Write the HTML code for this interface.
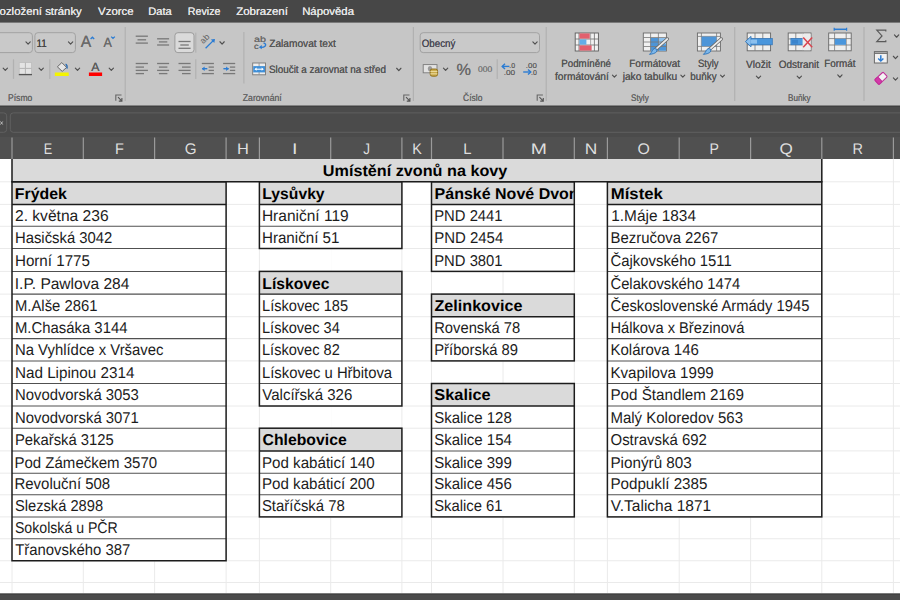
<!DOCTYPE html>
<html><head><meta charset="utf-8">
<style>
html,body{margin:0;padding:0;}
body{text-rendering:geometricPrecision;width:900px;height:600px;overflow:hidden;position:relative;background:#fff;font-family:"Liberation Sans",sans-serif;}
.abs{position:absolute;}
#tabs{position:absolute;left:0;top:0;width:900px;height:23px;background:linear-gradient(#474747 0,#474747 22px,#7a7a7a 22px,#7a7a7a 23px);}
#tabs span{position:absolute;top:3px;font-size:12.2px;color:#ececec;white-space:nowrap;}
#ribbon{position:absolute;left:0;top:23px;width:900px;height:82px;background:#c6c6c6;}
#fbar{position:absolute;left:0;top:105px;width:900px;height:33px;background:linear-gradient(#838383 0,#838383 1px,#404040 1px,#404040 2px,#4b4b4b 2px);}
#colhead{position:absolute;left:0;top:137px;width:900px;height:22px;background:#505050;}
.ch{position:absolute;top:0;height:22px;line-height:22px;text-align:center;color:#e8e8e8;font-size:15.2px;}
.ch span{display:inline-block;transform:scaleX(0.9);position:relative;top:0.4px;left:0.5px;}
#sheet{position:absolute;left:0;top:0;width:900px;height:600px;}
.s{position:absolute;white-space:nowrap;display:block;transform-origin:0 0;font-size:15.7px;line-height:15.7px;color:#1c1c1c;}
.s.b{font-weight:bold;color:#000;}
.clip{position:absolute;overflow:hidden;}
#rlayer{position:absolute;left:0;top:0;width:900px;height:106px;overflow:hidden;}
.t{position:absolute;white-space:nowrap;transform-origin:0 0;display:block;}
#bottom{position:absolute;left:0;top:593px;width:900px;height:7px;background:linear-gradient(#7a7a7a 0,#7a7a7a 1px,#424242 1px,#424242 2px,#4b4b4b 2px);}
.rt{position:absolute;color:#3a3a3a;font-size:10px;white-space:nowrap;}
.sep{position:absolute;width:1px;background:#a8a8a8;top:5px;height:73px;}
</style></head><body>
<div id="sheet"><svg class="abs" style="left:0;top:0" width="900" height="600" viewBox="0 0 900 600"><line x1="12.00" y1="159.00" x2="12.00" y2="593.00" stroke="#eaeaea" stroke-width="1"/><line x1="83.30" y1="159.00" x2="83.30" y2="593.00" stroke="#eaeaea" stroke-width="1"/><line x1="154.60" y1="159.00" x2="154.60" y2="593.00" stroke="#eaeaea" stroke-width="1"/><line x1="226.10" y1="159.00" x2="226.10" y2="593.00" stroke="#eaeaea" stroke-width="1"/><line x1="259.40" y1="159.00" x2="259.40" y2="593.00" stroke="#eaeaea" stroke-width="1"/><line x1="330.70" y1="159.00" x2="330.70" y2="593.00" stroke="#eaeaea" stroke-width="1"/><line x1="401.90" y1="159.00" x2="401.90" y2="593.00" stroke="#eaeaea" stroke-width="1"/><line x1="431.50" y1="159.00" x2="431.50" y2="593.00" stroke="#eaeaea" stroke-width="1"/><line x1="503.00" y1="159.00" x2="503.00" y2="593.00" stroke="#eaeaea" stroke-width="1"/><line x1="574.30" y1="159.00" x2="574.30" y2="593.00" stroke="#eaeaea" stroke-width="1"/><line x1="607.40" y1="159.00" x2="607.40" y2="593.00" stroke="#eaeaea" stroke-width="1"/><line x1="679.20" y1="159.00" x2="679.20" y2="593.00" stroke="#eaeaea" stroke-width="1"/><line x1="750.60" y1="159.00" x2="750.60" y2="593.00" stroke="#eaeaea" stroke-width="1"/><line x1="821.80" y1="159.00" x2="821.80" y2="593.00" stroke="#eaeaea" stroke-width="1"/><line x1="893.40" y1="159.00" x2="893.40" y2="593.00" stroke="#eaeaea" stroke-width="1"/><line x1="0.00" y1="181.80" x2="900.00" y2="181.80" stroke="#eaeaea" stroke-width="1"/><line x1="0.00" y1="204.40" x2="900.00" y2="204.40" stroke="#eaeaea" stroke-width="1"/><line x1="0.00" y1="226.30" x2="900.00" y2="226.30" stroke="#eaeaea" stroke-width="1"/><line x1="0.00" y1="248.50" x2="900.00" y2="248.50" stroke="#eaeaea" stroke-width="1"/><line x1="0.00" y1="271.40" x2="900.00" y2="271.40" stroke="#eaeaea" stroke-width="1"/><line x1="0.00" y1="294.10" x2="900.00" y2="294.10" stroke="#eaeaea" stroke-width="1"/><line x1="0.00" y1="316.70" x2="900.00" y2="316.70" stroke="#eaeaea" stroke-width="1"/><line x1="0.00" y1="338.60" x2="900.00" y2="338.60" stroke="#eaeaea" stroke-width="1"/><line x1="0.00" y1="360.90" x2="900.00" y2="360.90" stroke="#eaeaea" stroke-width="1"/><line x1="0.00" y1="383.50" x2="900.00" y2="383.50" stroke="#eaeaea" stroke-width="1"/><line x1="0.00" y1="406.00" x2="900.00" y2="406.00" stroke="#eaeaea" stroke-width="1"/><line x1="0.00" y1="428.20" x2="900.00" y2="428.20" stroke="#eaeaea" stroke-width="1"/><line x1="0.00" y1="450.90" x2="900.00" y2="450.90" stroke="#eaeaea" stroke-width="1"/><line x1="0.00" y1="473.15" x2="900.00" y2="473.15" stroke="#eaeaea" stroke-width="1"/><line x1="0.00" y1="494.80" x2="900.00" y2="494.80" stroke="#eaeaea" stroke-width="1"/><line x1="0.00" y1="516.90" x2="900.00" y2="516.90" stroke="#eaeaea" stroke-width="1"/><line x1="0.00" y1="538.75" x2="900.00" y2="538.75" stroke="#eaeaea" stroke-width="1"/><line x1="0.00" y1="560.75" x2="900.00" y2="560.75" stroke="#eaeaea" stroke-width="1"/><line x1="0.00" y1="582.50" x2="900.00" y2="582.50" stroke="#eaeaea" stroke-width="1"/><rect x="329.90" y="249.10" width="1.60" height="21.70" fill="#fff"/><rect x="329.90" y="406.60" width="1.60" height="21.00" fill="#fff"/><rect x="12.00" y="159.00" width="809.80" height="22.80" fill="#dadada"/><rect x="12.00" y="181.80" width="214.10" height="378.95" fill="#fff"/><rect x="12.00" y="181.80" width="214.10" height="22.60" fill="#dadada"/><rect x="259.40" y="181.80" width="142.50" height="66.70" fill="#fff"/><rect x="259.40" y="181.80" width="142.50" height="22.60" fill="#dadada"/><rect x="259.40" y="271.40" width="142.50" height="134.60" fill="#fff"/><rect x="259.40" y="271.40" width="142.50" height="22.70" fill="#dadada"/><rect x="259.40" y="428.20" width="142.50" height="88.70" fill="#fff"/><rect x="259.40" y="428.20" width="142.50" height="22.70" fill="#dadada"/><rect x="431.50" y="181.80" width="142.80" height="89.60" fill="#fff"/><rect x="431.50" y="181.80" width="142.80" height="22.60" fill="#dadada"/><rect x="431.50" y="294.10" width="142.80" height="66.80" fill="#fff"/><rect x="431.50" y="294.10" width="142.80" height="22.60" fill="#dadada"/><rect x="431.50" y="383.50" width="142.80" height="133.40" fill="#fff"/><rect x="431.50" y="383.50" width="142.80" height="22.50" fill="#dadada"/><rect x="607.40" y="181.80" width="214.40" height="335.10" fill="#fff"/><rect x="607.40" y="181.80" width="214.40" height="22.60" fill="#dadada"/><line x1="12.00" y1="226.30" x2="226.10" y2="226.30" stroke="#505050" stroke-width="1.05"/><line x1="12.00" y1="248.50" x2="226.10" y2="248.50" stroke="#505050" stroke-width="1.05"/><line x1="12.00" y1="271.40" x2="226.10" y2="271.40" stroke="#505050" stroke-width="1.05"/><line x1="12.00" y1="294.10" x2="226.10" y2="294.10" stroke="#505050" stroke-width="1.05"/><line x1="12.00" y1="316.70" x2="226.10" y2="316.70" stroke="#505050" stroke-width="1.05"/><line x1="12.00" y1="338.60" x2="226.10" y2="338.60" stroke="#505050" stroke-width="1.05"/><line x1="12.00" y1="360.90" x2="226.10" y2="360.90" stroke="#505050" stroke-width="1.05"/><line x1="12.00" y1="383.50" x2="226.10" y2="383.50" stroke="#505050" stroke-width="1.05"/><line x1="12.00" y1="406.00" x2="226.10" y2="406.00" stroke="#505050" stroke-width="1.05"/><line x1="12.00" y1="428.20" x2="226.10" y2="428.20" stroke="#505050" stroke-width="1.05"/><line x1="12.00" y1="450.90" x2="226.10" y2="450.90" stroke="#505050" stroke-width="1.05"/><line x1="12.00" y1="473.15" x2="226.10" y2="473.15" stroke="#505050" stroke-width="1.05"/><line x1="12.00" y1="494.80" x2="226.10" y2="494.80" stroke="#505050" stroke-width="1.05"/><line x1="12.00" y1="516.90" x2="226.10" y2="516.90" stroke="#505050" stroke-width="1.05"/><line x1="12.00" y1="538.75" x2="226.10" y2="538.75" stroke="#505050" stroke-width="1.05"/><line x1="12.00" y1="204.40" x2="226.10" y2="204.40" stroke="#1c1c1c" stroke-width="1.45"/><rect x="12.00" y="181.80" width="214.10" height="378.95" fill="none" stroke="#1c1c1c" stroke-width="1.5"/><line x1="259.40" y1="226.30" x2="401.90" y2="226.30" stroke="#505050" stroke-width="1.05"/><line x1="259.40" y1="204.40" x2="401.90" y2="204.40" stroke="#1c1c1c" stroke-width="1.45"/><rect x="259.40" y="181.80" width="142.50" height="66.70" fill="none" stroke="#1c1c1c" stroke-width="1.5"/><line x1="259.40" y1="316.70" x2="401.90" y2="316.70" stroke="#505050" stroke-width="1.05"/><line x1="259.40" y1="338.60" x2="401.90" y2="338.60" stroke="#505050" stroke-width="1.05"/><line x1="259.40" y1="360.90" x2="401.90" y2="360.90" stroke="#505050" stroke-width="1.05"/><line x1="259.40" y1="383.50" x2="401.90" y2="383.50" stroke="#505050" stroke-width="1.05"/><line x1="259.40" y1="294.10" x2="401.90" y2="294.10" stroke="#1c1c1c" stroke-width="1.45"/><rect x="259.40" y="271.40" width="142.50" height="134.60" fill="none" stroke="#1c1c1c" stroke-width="1.5"/><line x1="259.40" y1="473.15" x2="401.90" y2="473.15" stroke="#505050" stroke-width="1.05"/><line x1="259.40" y1="494.80" x2="401.90" y2="494.80" stroke="#505050" stroke-width="1.05"/><line x1="259.40" y1="450.90" x2="401.90" y2="450.90" stroke="#1c1c1c" stroke-width="1.45"/><rect x="259.40" y="428.20" width="142.50" height="88.70" fill="none" stroke="#1c1c1c" stroke-width="1.5"/><line x1="431.50" y1="226.30" x2="574.30" y2="226.30" stroke="#505050" stroke-width="1.05"/><line x1="431.50" y1="248.50" x2="574.30" y2="248.50" stroke="#505050" stroke-width="1.05"/><line x1="431.50" y1="204.40" x2="574.30" y2="204.40" stroke="#1c1c1c" stroke-width="1.45"/><rect x="431.50" y="181.80" width="142.80" height="89.60" fill="none" stroke="#1c1c1c" stroke-width="1.5"/><line x1="431.50" y1="338.60" x2="574.30" y2="338.60" stroke="#505050" stroke-width="1.05"/><line x1="431.50" y1="316.70" x2="574.30" y2="316.70" stroke="#1c1c1c" stroke-width="1.45"/><rect x="431.50" y="294.10" width="142.80" height="66.80" fill="none" stroke="#1c1c1c" stroke-width="1.5"/><line x1="431.50" y1="428.20" x2="574.30" y2="428.20" stroke="#505050" stroke-width="1.05"/><line x1="431.50" y1="450.90" x2="574.30" y2="450.90" stroke="#505050" stroke-width="1.05"/><line x1="431.50" y1="473.15" x2="574.30" y2="473.15" stroke="#505050" stroke-width="1.05"/><line x1="431.50" y1="494.80" x2="574.30" y2="494.80" stroke="#505050" stroke-width="1.05"/><line x1="431.50" y1="406.00" x2="574.30" y2="406.00" stroke="#1c1c1c" stroke-width="1.45"/><rect x="431.50" y="383.50" width="142.80" height="133.40" fill="none" stroke="#1c1c1c" stroke-width="1.5"/><line x1="607.40" y1="226.30" x2="821.80" y2="226.30" stroke="#505050" stroke-width="1.05"/><line x1="607.40" y1="248.50" x2="821.80" y2="248.50" stroke="#505050" stroke-width="1.05"/><line x1="607.40" y1="271.40" x2="821.80" y2="271.40" stroke="#505050" stroke-width="1.05"/><line x1="607.40" y1="294.10" x2="821.80" y2="294.10" stroke="#505050" stroke-width="1.05"/><line x1="607.40" y1="316.70" x2="821.80" y2="316.70" stroke="#505050" stroke-width="1.05"/><line x1="607.40" y1="338.60" x2="821.80" y2="338.60" stroke="#505050" stroke-width="1.05"/><line x1="607.40" y1="360.90" x2="821.80" y2="360.90" stroke="#505050" stroke-width="1.05"/><line x1="607.40" y1="383.50" x2="821.80" y2="383.50" stroke="#505050" stroke-width="1.05"/><line x1="607.40" y1="406.00" x2="821.80" y2="406.00" stroke="#505050" stroke-width="1.05"/><line x1="607.40" y1="428.20" x2="821.80" y2="428.20" stroke="#505050" stroke-width="1.05"/><line x1="607.40" y1="450.90" x2="821.80" y2="450.90" stroke="#505050" stroke-width="1.05"/><line x1="607.40" y1="473.15" x2="821.80" y2="473.15" stroke="#505050" stroke-width="1.05"/><line x1="607.40" y1="494.80" x2="821.80" y2="494.80" stroke="#505050" stroke-width="1.05"/><line x1="607.40" y1="204.40" x2="821.80" y2="204.40" stroke="#1c1c1c" stroke-width="1.45"/><rect x="607.40" y="181.80" width="214.40" height="335.10" fill="none" stroke="#1c1c1c" stroke-width="1.5"/><path d="M12,158 V181.80 H821.8 V158" fill="none" stroke="#1c1c1c" stroke-width="1.5"/><g font-family="Liberation Sans" text-rendering="geometricPrecision"><text transform="translate(322.87,176) scale(1.0319,1)" font-size="15.7" fill="#000" font-weight="bold">Umístění zvonů na kovy</text><text transform="translate(14.83,199) scale(1.0118,1)" font-size="15.7" fill="#000" font-weight="bold">Frýdek</text><text transform="translate(14.99,221) scale(0.9939,1)" font-size="15.7" fill="#1c1c1c" >2. května 236</text><text transform="translate(14.98,243) scale(0.9458,1)" font-size="15.7" fill="#1c1c1c" >Hasičská 3042</text><text transform="translate(14.95,266) scale(0.9658,1)" font-size="15.7" fill="#1c1c1c" >Horní 1775</text><text transform="translate(14.77,289) scale(0.9898,1)" font-size="15.7" fill="#1c1c1c" >I.P. Pawlova 284</text><text transform="translate(14.98,311) scale(0.9450,1)" font-size="15.7" fill="#1c1c1c" >M.Alše 2861</text><text transform="translate(14.97,333) scale(0.9486,1)" font-size="15.7" fill="#1c1c1c" >M.Chasáka 3144</text><text transform="translate(14.97,355) scale(0.9480,1)" font-size="15.7" fill="#1c1c1c" >Na Vyhlídce x Vršavec</text><text transform="translate(14.94,378) scale(0.9716,1)" font-size="15.7" fill="#1c1c1c" >Nad Lipinou 2314</text><text transform="translate(14.97,400) scale(0.9471,1)" font-size="15.7" fill="#1c1c1c" >Novodvorská 3053</text><text transform="translate(14.97,423) scale(0.9472,1)" font-size="15.7" fill="#1c1c1c" >Novodvorská 3071</text><text transform="translate(14.98,445) scale(0.9432,1)" font-size="15.7" fill="#1c1c1c" >Pekařská 3125</text><text transform="translate(14.46,468) scale(0.9571,1)" font-size="15.7" fill="#1c1c1c" >Pod Zámečkem 3570</text><text transform="translate(14.46,489) scale(0.9544,1)" font-size="15.7" fill="#1c1c1c" >Revoluční 508</text><text transform="translate(14.92,511) scale(0.9359,1)" font-size="15.7" fill="#1c1c1c" >Slezská 2898</text><text transform="translate(14.95,533) scale(0.9000,1)" font-size="15.7" fill="#1c1c1c" >Sokolská u PČR</text><text transform="translate(15.21,555) scale(0.9493,1)" font-size="15.7" fill="#1c1c1c" >Třanovského 387</text><text transform="translate(262.34,199) scale(1.0008,1)" font-size="15.7" fill="#000" font-weight="bold">Lysůvky</text><text transform="translate(261.92,221) scale(0.9877,1)" font-size="15.7" fill="#1c1c1c" >Hraniční 119</text><text transform="translate(261.95,243) scale(0.9656,1)" font-size="15.7" fill="#1c1c1c" >Hraniční 51</text><text transform="translate(262.34,289) scale(0.9979,1)" font-size="15.7" fill="#000" font-weight="bold">Lískovec</text><text transform="translate(262.00,311) scale(0.9314,1)" font-size="15.7" fill="#1c1c1c" >Lískovec 185</text><text transform="translate(262.00,333) scale(0.9289,1)" font-size="15.7" fill="#1c1c1c" >Lískovec 34</text><text transform="translate(262.00,355) scale(0.9291,1)" font-size="15.7" fill="#1c1c1c" >Lískovec 82</text><text transform="translate(261.98,378) scale(0.9443,1)" font-size="15.7" fill="#1c1c1c" >Lískovec u Hřbitova</text><text transform="translate(262.31,400) scale(0.9580,1)" font-size="15.7" fill="#1c1c1c" >Valcířská 326</text><text transform="translate(262.58,445) scale(1.0049,1)" font-size="15.7" fill="#000" font-weight="bold">Chlebovice</text><text transform="translate(261.95,468) scale(0.9644,1)" font-size="15.7" fill="#1c1c1c" >Pod kabáticí 140</text><text transform="translate(261.95,489) scale(0.9644,1)" font-size="15.7" fill="#1c1c1c" >Pod kabáticí 200</text><text transform="translate(261.91,511) scale(0.9511,1)" font-size="15.7" fill="#1c1c1c" >Staříčská 78</text><clipPath id="cp1"><rect x="431.50" y="181.80" width="142.10" height="22.60"/></clipPath><g clip-path="url(#cp1)"><text transform="translate(434.57,199) scale(1.0200,1)" font-size="15.7" fill="#000" font-weight="bold">Pánské Nové Dvory</text></g><text transform="translate(434.23,221) scale(0.9446,1)" font-size="15.7" fill="#1c1c1c" >PND 2441</text><text transform="translate(434.21,243) scale(0.9541,1)" font-size="15.7" fill="#1c1c1c" >PND 2454</text><text transform="translate(434.23,266) scale(0.9446,1)" font-size="15.7" fill="#1c1c1c" >PND 3801</text><text transform="translate(434.49,311) scale(1.0282,1)" font-size="15.7" fill="#000" font-weight="bold">Zelinkovice</text><text transform="translate(434.23,333) scale(0.9393,1)" font-size="15.7" fill="#1c1c1c" >Rovenská 78</text><text transform="translate(434.23,355) scale(0.9427,1)" font-size="15.7" fill="#1c1c1c" >Příborská 89</text><text transform="translate(434.32,400) scale(1.0413,1)" font-size="15.7" fill="#000" font-weight="bold">Skalice</text><text transform="translate(434.15,423) scale(0.9568,1)" font-size="15.7" fill="#1c1c1c" >Skalice 128</text><text transform="translate(434.15,445) scale(0.9591,1)" font-size="15.7" fill="#1c1c1c" >Skalice 154</text><text transform="translate(434.15,468) scale(0.9573,1)" font-size="15.7" fill="#1c1c1c" >Skalice 399</text><text transform="translate(434.15,489) scale(0.9568,1)" font-size="15.7" fill="#1c1c1c" >Skalice 456</text><text transform="translate(434.16,511) scale(0.9455,1)" font-size="15.7" fill="#1c1c1c" >Skalice 61</text><text transform="translate(610.78,199) scale(1.0663,1)" font-size="15.7" fill="#000" font-weight="bold">Místek</text><text transform="translate(611.26,221) scale(0.9807,1)" font-size="15.7" fill="#1c1c1c" >1.Máje 1834</text><text transform="translate(610.47,243) scale(0.9505,1)" font-size="15.7" fill="#1c1c1c" >Bezručova 2267</text><text transform="translate(610.50,266) scale(0.9484,1)" font-size="15.7" fill="#1c1c1c" >Čajkovského 1511</text><text transform="translate(610.51,289) scale(0.9405,1)" font-size="15.7" fill="#1c1c1c" >Čelakovského 1474</text><text transform="translate(610.50,311) scale(0.9423,1)" font-size="15.7" fill="#1c1c1c" >Československé Armády 1945</text><text transform="translate(610.49,333) scale(0.9362,1)" font-size="15.7" fill="#1c1c1c" >Hálkova x Březinová</text><text transform="translate(610.46,355) scale(0.9566,1)" font-size="15.7" fill="#1c1c1c" >Kolárova 146</text><text transform="translate(610.45,378) scale(0.9625,1)" font-size="15.7" fill="#1c1c1c" >Kvapilova 1999</text><text transform="translate(610.44,400) scale(0.9683,1)" font-size="15.7" fill="#1c1c1c" >Pod Štandlem 2169</text><text transform="translate(610.46,423) scale(0.9557,1)" font-size="15.7" fill="#1c1c1c" >Malý Koloredov 563</text><text transform="translate(610.52,445) scale(0.9524,1)" font-size="15.7" fill="#1c1c1c" >Ostravská 692</text><text transform="translate(610.44,468) scale(0.9718,1)" font-size="15.7" fill="#1c1c1c" >Pionýrů 803</text><text transform="translate(610.45,489) scale(0.9668,1)" font-size="15.7" fill="#1c1c1c" >Podpuklí 2385</text><text transform="translate(610.79,511) scale(0.9897,1)" font-size="15.7" fill="#1c1c1c" >V.Talicha 1871</text></g></svg></div>
<div id="tabs"></div>
<div id="ribbon"></div>
<div id="rlayer">
<svg class="abs" style="left:0;top:0" width="900" height="106" viewBox="0 0 900 106"><rect x="-10.00" y="32.70" width="42.40" height="19.90" fill="#c9c9c9" stroke="#a2a2a2" stroke-width="1" rx="3"/><rect x="34.90" y="32.70" width="40.50" height="19.90" fill="#c9c9c9" stroke="#a2a2a2" stroke-width="1" rx="3"/><rect x="420.20" y="32.70" width="119.30" height="19.90" fill="#c9c9c9" stroke="#a2a2a2" stroke-width="1" rx="3"/><polyline points="25.95,41.85 28.10,44.15 30.25,41.85" fill="none" stroke="#505050" stroke-width="1.15" stroke-linecap="round" stroke-linejoin="round"/><polyline points="68.45,41.85 70.60,44.15 72.75,41.85" fill="none" stroke="#505050" stroke-width="1.15" stroke-linecap="round" stroke-linejoin="round"/><polyline points="3.15,68.15 5.30,70.45 7.45,68.15" fill="none" stroke="#505050" stroke-width="1.15" stroke-linecap="round" stroke-linejoin="round"/><polyline points="39.05,68.15 41.20,70.45 43.35,68.15" fill="none" stroke="#505050" stroke-width="1.15" stroke-linecap="round" stroke-linejoin="round"/><polyline points="75.35,68.15 77.50,70.45 79.65,68.15" fill="none" stroke="#505050" stroke-width="1.15" stroke-linecap="round" stroke-linejoin="round"/><polyline points="109.15,68.15 111.30,70.45 113.45,68.15" fill="none" stroke="#505050" stroke-width="1.15" stroke-linecap="round" stroke-linejoin="round"/><polyline points="219.95,41.75 222.10,44.05 224.25,41.75" fill="none" stroke="#505050" stroke-width="1.15" stroke-linecap="round" stroke-linejoin="round"/><polyline points="396.65,68.25 398.80,70.55 400.95,68.25" fill="none" stroke="#505050" stroke-width="1.15" stroke-linecap="round" stroke-linejoin="round"/><polyline points="443.45,68.15 445.60,70.45 447.75,68.15" fill="none" stroke="#505050" stroke-width="1.15" stroke-linecap="round" stroke-linejoin="round"/><polyline points="532.85,41.85 535.00,44.15 537.15,41.85" fill="none" stroke="#505050" stroke-width="1.15" stroke-linecap="round" stroke-linejoin="round"/><polyline points="612.45,75.05 614.40,77.15 616.35,75.05" fill="none" stroke="#505050" stroke-width="1.15" stroke-linecap="round" stroke-linejoin="round"/><polyline points="680.85,75.05 682.80,77.15 684.75,75.05" fill="none" stroke="#505050" stroke-width="1.15" stroke-linecap="round" stroke-linejoin="round"/><polyline points="720.55,75.05 722.50,77.15 724.45,75.05" fill="none" stroke="#505050" stroke-width="1.15" stroke-linecap="round" stroke-linejoin="round"/><polyline points="756.35,76.15 758.50,78.45 760.65,76.15" fill="none" stroke="#505050" stroke-width="1.15" stroke-linecap="round" stroke-linejoin="round"/><polyline points="797.15,76.15 799.30,78.45 801.45,76.15" fill="none" stroke="#505050" stroke-width="1.15" stroke-linecap="round" stroke-linejoin="round"/><polyline points="837.75,74.95 839.90,77.25 842.05,74.95" fill="none" stroke="#505050" stroke-width="1.15" stroke-linecap="round" stroke-linejoin="round"/><polyline points="894.45,34.95 896.60,37.25 898.75,34.95" fill="none" stroke="#505050" stroke-width="1.15" stroke-linecap="round" stroke-linejoin="round"/><polyline points="893.35,56.25 895.50,58.55 897.65,56.25" fill="none" stroke="#505050" stroke-width="1.15" stroke-linecap="round" stroke-linejoin="round"/><polyline points="893.35,77.85 895.50,80.15 897.65,77.85" fill="none" stroke="#505050" stroke-width="1.15" stroke-linecap="round" stroke-linejoin="round"/><rect x="12.90" y="59.30" width="1.2" height="19.60" fill="#b1b1b1"/><rect x="49.20" y="59.30" width="1.2" height="19.60" fill="#b1b1b1"/><rect x="496.60" y="59.30" width="1.2" height="19.60" fill="#b1b1b1"/><rect x="124.60" y="27.00" width="1.2" height="74.00" fill="#b1b1b1"/><rect x="412.80" y="27.00" width="1.2" height="74.00" fill="#b1b1b1"/><rect x="545.60" y="27.00" width="1.2" height="74.00" fill="#b1b1b1"/><rect x="734.10" y="27.00" width="1.2" height="74.00" fill="#b1b1b1"/><rect x="863.40" y="27.00" width="1.2" height="74.00" fill="#b1b1b1"/><rect x="195.20" y="32.70" width="1.2" height="19.90" fill="#b1b1b1"/><rect x="195.20" y="59.30" width="1.2" height="19.60" fill="#b1b1b1"/><rect x="243.30" y="32.00" width="1.2" height="51.50" fill="#b1b1b1"/><polyline points="90.6,39 92.4,37.2 94.2,39" fill="none" stroke="#2b7cd3" stroke-width="1.3"/><polyline points="111.2,36.6 113,38.4 114.8,36.6" fill="none" stroke="#2b7cd3" stroke-width="1.3"/><rect x="19.20" y="62.60" width="12.40" height="11.60" fill="#e4e4e4" stroke="#bdbdbd" stroke-width="0.8" rx="0"/><line x1="25.40" y1="62.60" x2="25.40" y2="74.20" stroke="#b5b5b5" stroke-width="1"/><line x1="19.20" y1="68.40" x2="31.60" y2="68.40" stroke="#b5b5b5" stroke-width="1"/><line x1="18.80" y1="74.60" x2="32.00" y2="74.60" stroke="#555" stroke-width="1.3"/><path d="M61.8,62.6 L66.6,67.4 L62.2,71.4 L57.4,66.8 Z" fill="#e6e6e6" stroke="#666" stroke-width="1" /><path d="M65.6,64.2 Q67.6,65 67,68.6" fill="none" stroke="#2b6cb5" stroke-width="1.3" /><rect x="54.80" y="72.50" width="13.90" height="3.50" fill="#f4f400" stroke="none" stroke-width="1" rx="0"/><rect x="88.90" y="72.50" width="13.20" height="3.50" fill="#ff0000" stroke="none" stroke-width="1" rx="0"/><path d="M121.50,95.00 H115.80 V100.70" fill="none" stroke="#666" stroke-width="1.1" /><path d="M118.00,97.20 L121.70,100.90 M121.90,98.00 V101.10 H118.80" fill="none" stroke="#555" stroke-width="1.1" /><path d="M409.50,95.00 H403.80 V100.70" fill="none" stroke="#666" stroke-width="1.1" /><path d="M406.00,97.20 L409.70,100.90 M409.90,98.00 V101.10 H406.80" fill="none" stroke="#555" stroke-width="1.1" /><path d="M542.90,95.00 H537.20 V100.70" fill="none" stroke="#666" stroke-width="1.1" /><path d="M539.40,97.20 L543.10,100.90 M543.30,98.00 V101.10 H540.20" fill="none" stroke="#555" stroke-width="1.1" /><line x1="135.70" y1="36.20" x2="147.90" y2="36.20" stroke="#787878" stroke-width="1.3"/><line x1="137.50" y1="39.80" x2="146.10" y2="39.80" stroke="#787878" stroke-width="1.3"/><line x1="135.70" y1="43.10" x2="147.90" y2="43.10" stroke="#787878" stroke-width="1.3"/><line x1="157.10" y1="38.80" x2="169.10" y2="38.80" stroke="#787878" stroke-width="1.3"/><line x1="158.90" y1="41.90" x2="167.30" y2="41.90" stroke="#787878" stroke-width="1.3"/><line x1="157.10" y1="45.00" x2="169.10" y2="45.00" stroke="#787878" stroke-width="1.3"/><rect x="174.90" y="32.70" width="19.10" height="19.90" fill="#dadada" stroke="#9c9c9c" stroke-width="1" rx="3"/><line x1="178.50" y1="41.50" x2="190.60" y2="41.50" stroke="#787878" stroke-width="1.3"/><line x1="180.30" y1="45.00" x2="188.80" y2="45.00" stroke="#787878" stroke-width="1.3"/><line x1="178.50" y1="48.30" x2="190.60" y2="48.30" stroke="#787878" stroke-width="1.3"/><line x1="135.70" y1="63.50" x2="147.90" y2="63.50" stroke="#787878" stroke-width="1.3"/><line x1="135.70" y1="67.10" x2="144.00" y2="67.10" stroke="#787878" stroke-width="1.3"/><line x1="135.70" y1="70.40" x2="147.90" y2="70.40" stroke="#787878" stroke-width="1.3"/><line x1="135.70" y1="73.60" x2="144.00" y2="73.60" stroke="#787878" stroke-width="1.3"/><line x1="157.10" y1="63.50" x2="169.10" y2="63.50" stroke="#787878" stroke-width="1.3"/><line x1="158.90" y1="67.10" x2="167.40" y2="67.10" stroke="#787878" stroke-width="1.3"/><line x1="157.10" y1="70.40" x2="169.10" y2="70.40" stroke="#787878" stroke-width="1.3"/><line x1="158.90" y1="73.60" x2="167.40" y2="73.60" stroke="#787878" stroke-width="1.3"/><line x1="178.50" y1="63.50" x2="190.60" y2="63.50" stroke="#787878" stroke-width="1.3"/><line x1="182.00" y1="67.10" x2="190.60" y2="67.10" stroke="#787878" stroke-width="1.3"/><line x1="178.50" y1="70.40" x2="190.60" y2="70.40" stroke="#787878" stroke-width="1.3"/><line x1="182.00" y1="73.60" x2="190.60" y2="73.60" stroke="#787878" stroke-width="1.3"/><line x1="201.80" y1="63.50" x2="213.90" y2="63.50" stroke="#787878" stroke-width="1.3"/><line x1="201.80" y1="73.60" x2="213.90" y2="73.60" stroke="#787878" stroke-width="1.3"/><line x1="208.60" y1="67.10" x2="213.90" y2="67.10" stroke="#787878" stroke-width="1.3"/><line x1="208.60" y1="70.40" x2="213.90" y2="70.40" stroke="#787878" stroke-width="1.3"/><line x1="202.10" y1="68.70" x2="207.30" y2="68.70" stroke="#2b7cd3" stroke-width="1.4"/><polygon points="201.80,68.7 204.60,66.4 204.60,71.0" fill="#2b7cd3"/><line x1="223.10" y1="63.50" x2="235.20" y2="63.50" stroke="#787878" stroke-width="1.3"/><line x1="223.10" y1="73.60" x2="235.20" y2="73.60" stroke="#787878" stroke-width="1.3"/><line x1="229.90" y1="67.10" x2="235.20" y2="67.10" stroke="#787878" stroke-width="1.3"/><line x1="229.90" y1="70.40" x2="235.20" y2="70.40" stroke="#787878" stroke-width="1.3"/><line x1="223.40" y1="68.70" x2="228.60" y2="68.70" stroke="#2b7cd3" stroke-width="1.4"/><polygon points="228.90,68.7 226.10,66.4 226.10,71.0" fill="#2b7cd3"/><text x="0" y="0" transform="translate(203.3,44.2) rotate(-45)" font-family="Liberation Sans" font-size="8.6" fill="#5e5e5e">ab</text><line x1="205.60" y1="48.20" x2="214.00" y2="39.90" stroke="#2b7cd3" stroke-width="1.3"/><polygon points="215,38.9 210.8,39.6 214.3,43.1" fill="#2b7cd3"/><path d="M263.5,42.8 Q266.8,44 265,46.2 Q263.6,47.6 260.4,47.3" fill="none" stroke="#2b7cd3" stroke-width="1.4" /><polygon points="258.8,47.2 261.8,45 261.8,49.2" fill="#2b7cd3"/><rect x="252.70" y="63.00" width="12.80" height="11.80" fill="#eeeeee" stroke="#777" stroke-width="0.9" rx="0"/><line x1="259.10" y1="63.00" x2="259.10" y2="74.80" stroke="#8a8a8a" stroke-width="0.8"/><rect x="253.20" y="66.10" width="11.80" height="6.30" fill="#3f8fd8" stroke="none" stroke-width="1" rx="0"/><line x1="255.20" y1="69.20" x2="263.00" y2="69.20" stroke="#fff" stroke-width="1.1"/><polygon points="254.4,69.2 256.6,67.6 256.6,70.8" fill="#fff"/><polygon points="263.8,69.2 261.6,67.6 261.6,70.8" fill="#fff"/><rect x="423.20" y="64.60" width="13.80" height="8.20" fill="#e2e2e2" stroke="#7a7a7a" stroke-width="0.9" rx="0"/><ellipse cx="430" cy="68.7" rx="2.2" ry="2.6" fill="#9a9a9a"/><rect x="430.20" y="69.00" width="7.40" height="7.20" fill="#c9a94a" stroke="#8a6a14" stroke-width="0.9" rx="2"/><line x1="430.40" y1="71.40" x2="437.40" y2="71.40" stroke="#f1e3ad" stroke-width="0.9"/><line x1="430.40" y1="73.80" x2="437.40" y2="73.80" stroke="#f1e3ad" stroke-width="0.9"/><line x1="502.20" y1="66.40" x2="509.40" y2="66.40" stroke="#2b7cd3" stroke-width="1.4"/><polyline points="505,63.8 502.2,66.4 505,69" fill="none" stroke="#2b7cd3" stroke-width="1.4"/><line x1="523.20" y1="72.00" x2="530.60" y2="72.00" stroke="#2b7cd3" stroke-width="1.4"/><polyline points="528,69.4 530.8,72 528,74.6" fill="none" stroke="#2b7cd3" stroke-width="1.4"/><rect x="575.20" y="33.00" width="23.20" height="18.00" fill="#f2f2f2" stroke="#5c5c5c" stroke-width="0.9" rx="0"/><line x1="575.20" y1="39.00" x2="598.40" y2="39.00" stroke="#6a6a6a" stroke-width="0.8"/><line x1="575.20" y1="45.00" x2="598.40" y2="45.00" stroke="#6a6a6a" stroke-width="0.8"/><line x1="579.00" y1="33.00" x2="579.00" y2="51.00" stroke="#6a6a6a" stroke-width="0.8"/><line x1="594.40" y1="33.00" x2="594.40" y2="51.00" stroke="#6a6a6a" stroke-width="0.8"/><line x1="590.60" y1="33.00" x2="590.60" y2="51.00" stroke="#8a8a8a" stroke-width="0.7"/><rect x="579.40" y="33.40" width="10.40" height="5.20" fill="#e2606e" stroke="none" stroke-width="1" rx="0"/><rect x="579.40" y="39.40" width="7.00" height="5.20" fill="#63aee8" stroke="none" stroke-width="1" rx="0"/><rect x="579.40" y="45.40" width="12.20" height="5.20" fill="#e2606e" stroke="none" stroke-width="1" rx="0"/><rect x="643.30" y="33.00" width="23.10" height="18.00" fill="#f0f0f0" stroke="#6a6a6a" stroke-width="0.9" rx="0"/><rect x="650.60" y="38.00" width="15.40" height="12.60" fill="#8cc0ee" stroke="none" stroke-width="1" rx="0"/><rect x="650.60" y="38.00" width="7.80" height="12.60" fill="#4d95d8" stroke="none" stroke-width="1" rx="0"/><rect x="658.40" y="44.40" width="7.60" height="6.20" fill="#4d95d8" stroke="none" stroke-width="1" rx="0"/><line x1="643.30" y1="37.50" x2="666.40" y2="37.50" stroke="#7a7a7a" stroke-width="0.8"/><line x1="643.30" y1="42.00" x2="666.40" y2="42.00" stroke="#7a7a7a" stroke-width="0.8"/><line x1="643.30" y1="46.50" x2="666.40" y2="46.50" stroke="#7a7a7a" stroke-width="0.8"/><line x1="650.60" y1="33.00" x2="650.60" y2="51.00" stroke="#7a7a7a" stroke-width="0.8"/><line x1="658.40" y1="33.00" x2="658.40" y2="51.00" stroke="#7a7a7a" stroke-width="0.8"/><path d="M667.30,39 L655.10,49.8" fill="none" stroke="#6a6a6a" stroke-width="3.4" stroke-linecap="round"/><path d="M667.30,39 L655.10,49.8" fill="none" stroke="#ececec" stroke-width="1.7" stroke-linecap="round"/><path d="M656.70,49 Q658.50,53.4 649.50,54.4 Q652.10,52 652.50,50 Q654.10,47.6 656.70,49 Z" fill="#7db7ea" stroke="#2f74b8" stroke-width="0.9" /><rect x="697.40" y="33.00" width="23.00" height="18.00" fill="#f0f0f0" stroke="#6a6a6a" stroke-width="0.9" rx="0"/><line x1="697.40" y1="36.40" x2="720.40" y2="36.40" stroke="#7a7a7a" stroke-width="0.8"/><line x1="697.40" y1="46.40" x2="720.40" y2="46.40" stroke="#7a7a7a" stroke-width="0.8"/><line x1="701.40" y1="33.00" x2="701.40" y2="51.00" stroke="#7a7a7a" stroke-width="0.8"/><line x1="716.60" y1="33.00" x2="716.60" y2="51.00" stroke="#7a7a7a" stroke-width="0.8"/><rect x="701.60" y="36.60" width="14.80" height="9.60" fill="#4d95d8" stroke="none" stroke-width="1" rx="0"/><path d="M721.20,39 L709.00,49.8" fill="none" stroke="#6a6a6a" stroke-width="3.4" stroke-linecap="round"/><path d="M721.20,39 L709.00,49.8" fill="none" stroke="#ececec" stroke-width="1.7" stroke-linecap="round"/><path d="M710.60,49 Q712.40,53.4 703.40,54.4 Q706.00,52 706.40,50 Q708.00,47.6 710.60,49 Z" fill="#7db7ea" stroke="#2f74b8" stroke-width="0.9" /><rect x="747.20" y="33.00" width="23.40" height="17.80" fill="#efefef" stroke="#666" stroke-width="0.9" rx="0"/><line x1="747.20" y1="38.93" x2="770.60" y2="38.93" stroke="#777" stroke-width="0.8"/><line x1="755.00" y1="33.00" x2="755.00" y2="50.80" stroke="#777" stroke-width="0.8"/><line x1="747.20" y1="44.87" x2="770.60" y2="44.87" stroke="#777" stroke-width="0.8"/><line x1="762.80" y1="33.00" x2="762.80" y2="50.80" stroke="#777" stroke-width="0.8"/><rect x="750.00" y="38.50" width="22.30" height="6.30" fill="#4a96dc" stroke="#2f74b8" stroke-width="0.7" rx="0"/><polygon points="745.4,41.6 751,36.4 751,46.8" fill="#8cc0ee" stroke="#2f74b8" stroke-width="0.9"/><rect x="750.40" y="39.60" width="6.60" height="4.00" fill="#8cc0ee" stroke="none" stroke-width="1" rx="0"/><rect x="788.20" y="33.00" width="22.80" height="17.80" fill="#efefef" stroke="#666" stroke-width="0.9" rx="0"/><line x1="788.20" y1="38.93" x2="811.00" y2="38.93" stroke="#777" stroke-width="0.8"/><line x1="795.80" y1="33.00" x2="795.80" y2="50.80" stroke="#777" stroke-width="0.8"/><line x1="788.20" y1="44.87" x2="811.00" y2="44.87" stroke="#777" stroke-width="0.8"/><line x1="803.40" y1="33.00" x2="803.40" y2="50.80" stroke="#777" stroke-width="0.8"/><rect x="790.90" y="38.50" width="14.10" height="6.30" fill="#4a96dc" stroke="#2f74b8" stroke-width="0.7" rx="0"/><rect x="792.00" y="39.80" width="6.00" height="3.80" fill="#3b84cc" stroke="none" stroke-width="1" rx="0"/><rect x="802.60" y="33.60" width="8.00" height="16.60" fill="#ececec" stroke="none" stroke-width="1" rx="0"/><line x1="803.20" y1="37.60" x2="812.20" y2="47.20" stroke="#d9434e" stroke-width="1.5"/><line x1="812.20" y1="37.60" x2="803.20" y2="47.20" stroke="#d9434e" stroke-width="1.5"/><rect x="828.70" y="33.00" width="22.50" height="17.80" fill="#efefef" stroke="#666" stroke-width="0.9" rx="0"/><line x1="828.70" y1="38.60" x2="851.20" y2="38.60" stroke="#777" stroke-width="0.8"/><line x1="828.70" y1="45.00" x2="851.20" y2="45.00" stroke="#777" stroke-width="0.8"/><line x1="834.60" y1="33.00" x2="834.60" y2="50.80" stroke="#777" stroke-width="0.8"/><line x1="846.20" y1="33.00" x2="846.20" y2="50.80" stroke="#777" stroke-width="0.8"/><rect x="834.80" y="38.80" width="11.20" height="6.00" fill="#4a96dc" stroke="none" stroke-width="1" rx="0"/><line x1="834.00" y1="29.30" x2="846.80" y2="29.30" stroke="#2b7cd3" stroke-width="1.5"/><line x1="834.20" y1="27.80" x2="834.20" y2="30.80" stroke="#2b7cd3" stroke-width="1.2"/><line x1="846.60" y1="27.80" x2="846.60" y2="30.80" stroke="#2b7cd3" stroke-width="1.2"/><path d="M885.8,31.6 V30.2 H876.8 L882,35.9 L876.8,41.6 H885.8 V40.2" fill="none" stroke="#5a5a5a" stroke-width="1.2" stroke-linejoin="miter"/><rect x="874.40" y="51.60" width="12.90" height="11.40" fill="#f2f2f2" stroke="#6a6a6a" stroke-width="1" rx="0"/><line x1="874.40" y1="53.20" x2="887.30" y2="53.20" stroke="#6a6a6a" stroke-width="1.4"/><line x1="880.80" y1="55.20" x2="880.80" y2="60.60" stroke="#2b7cd3" stroke-width="1.5"/><polyline points="878.2,58.4 880.8,61 883.4,58.4" fill="none" stroke="#2b7cd3" stroke-width="1.4"/><g transform="translate(881,78.3) rotate(-43)"><rect x="-5.8" y="-3.2" width="11.6" height="6.4" rx="1.1" fill="#f4f4f4" stroke="#c2309a" stroke-width="1.05"/><rect x="-5.8" y="-3.2" width="4.4" height="6.4" rx="1" fill="#d43aa8" stroke="#c2309a" stroke-width="1.05"/></g><g font-family="Liberation Sans" text-rendering="geometricPrecision"><text transform="translate(-0.40,15) scale(1.0341,1)" font-size="11" fill="#e6e6e6" >ozložení stránky</text><text transform="translate(98.07,15) scale(1.0393,1)" font-size="11" fill="#e6e6e6" >Vzorce</text><text transform="translate(148.16,15) scale(1.0121,1)" font-size="11" fill="#e6e6e6" >Data</text><text transform="translate(187.79,15) scale(0.9704,1)" font-size="11" fill="#e6e6e6" >Revize</text><text transform="translate(236.16,15) scale(1.0458,1)" font-size="11" fill="#e6e6e6" >Zobrazení</text><text transform="translate(302.14,15) scale(1.0339,1)" font-size="11" fill="#e6e6e6" >Nápověda</text><text transform="translate(36.52,47) scale(0.9148,1)" font-size="10.8" fill="#444" >11</text><text transform="translate(80.69,47) scale(0.9644,1)" font-size="16.3" fill="#6a6a6a" >A</text><text transform="translate(103.49,47) scale(0.9444,1)" font-size="13.3" fill="#6a6a6a" >A</text><text transform="translate(91.37,71) scale(1.0164,1)" font-size="12.1" fill="#5a5a5a" >A</text><text transform="translate(8.02,101) scale(0.8832,1)" font-size="9.7" fill="#666666" >Písmo</text><text transform="translate(242.85,101) scale(0.8893,1)" font-size="9.7" fill="#666666" >Zarovnání</text><text transform="translate(463.10,101) scale(0.8731,1)" font-size="9.7" fill="#666666" >Číslo</text><text transform="translate(631.06,101) scale(0.8400,1)" font-size="9.7" fill="#666666" >Styly</text><text transform="translate(788.06,101) scale(0.8362,1)" font-size="9.7" fill="#666666" >Buňky</text><text transform="translate(269.20,47) scale(0.9501,1)" font-size="10.7" fill="#555555" >Zalamovat text</text><text transform="translate(268.93,73) scale(0.9255,1)" font-size="10.7" fill="#555555" >Sloučit a zarovnat na střed</text><text transform="translate(421.77,47) scale(0.9107,1)" font-size="10.7" fill="#4a4a55" >Obecný</text><text transform="translate(456.57,75) scale(1.0057,1)" font-size="16.2" fill="#6a6a6a" >%</text><text transform="translate(477.99,72) scale(1.0234,1)" font-size="8.3" fill="#777" >000</text><text transform="translate(561.25,67) scale(0.9096,1)" font-size="10.7" fill="#555555" >Podmíněné</text><text transform="translate(555.02,80) scale(0.9527,1)" font-size="10.7" fill="#555555" >formátování</text><text transform="translate(629.22,67) scale(0.9406,1)" font-size="10.7" fill="#555555" >Formátovat</text><text transform="translate(622.63,80) scale(0.9564,1)" font-size="10.7" fill="#555555" >jako tabulku</text><text transform="translate(697.96,67) scale(0.8892,1)" font-size="10.7" fill="#555555" >Styly</text><text transform="translate(690.34,80) scale(0.9186,1)" font-size="10.7" fill="#555555" >buňky</text><text transform="translate(746.08,68) scale(0.9508,1)" font-size="10.7" fill="#555555" >Vložit</text><text transform="translate(778.66,68) scale(0.9302,1)" font-size="10.7" fill="#555555" >Odstranit</text><text transform="translate(824.14,67) scale(0.9228,1)" font-size="10.7" fill="#555555" >Formát</text><text transform="translate(509.25,68) scale(0.9678,1)" font-size="7.2" fill="#666" >.0</text><text transform="translate(503.71,75) scale(1.1425,1)" font-size="7.2" fill="#666" >.00</text><text transform="translate(525.85,68) scale(1.0968,1)" font-size="7.2" fill="#666" >.00</text><text transform="translate(530.95,75) scale(0.9678,1)" font-size="7.2" fill="#666" >.0</text><text transform="translate(254.01,42) scale(1.3166,1)" font-size="8.2" fill="#6a6a6a" >ab</text><text transform="translate(254.11,49) scale(1.1442,1)" font-size="8.2" fill="#6a6a6a" >c</text><text transform="translate(-0.40,15) scale(1.0341,1)" font-size="11" fill="#e6e6e6" >ozložení stránky</text><text transform="translate(98.07,15) scale(1.0393,1)" font-size="11" fill="#e6e6e6" >Vzorce</text><text transform="translate(148.16,15) scale(1.0121,1)" font-size="11" fill="#e6e6e6" >Data</text><text transform="translate(187.79,15) scale(0.9704,1)" font-size="11" fill="#e6e6e6" >Revize</text><text transform="translate(236.16,15) scale(1.0458,1)" font-size="11" fill="#e6e6e6" >Zobrazení</text><text transform="translate(302.14,15) scale(1.0339,1)" font-size="11" fill="#e6e6e6" >Nápověda</text><text transform="translate(36.52,47) scale(0.9148,1)" font-size="10.8" fill="#444" >11</text><text transform="translate(80.69,47) scale(0.9644,1)" font-size="16.3" fill="#6a6a6a" >A</text><text transform="translate(103.49,47) scale(0.9444,1)" font-size="13.3" fill="#6a6a6a" >A</text><text transform="translate(91.37,71) scale(1.0164,1)" font-size="12.1" fill="#5a5a5a" >A</text><text transform="translate(8.02,101) scale(0.8832,1)" font-size="9.7" fill="#666666" >Písmo</text><text transform="translate(242.85,101) scale(0.8893,1)" font-size="9.7" fill="#666666" >Zarovnání</text><text transform="translate(463.10,101) scale(0.8731,1)" font-size="9.7" fill="#666666" >Číslo</text><text transform="translate(631.06,101) scale(0.8400,1)" font-size="9.7" fill="#666666" >Styly</text><text transform="translate(788.06,101) scale(0.8362,1)" font-size="9.7" fill="#666666" >Buňky</text><text transform="translate(269.20,47) scale(0.9501,1)" font-size="10.7" fill="#555555" >Zalamovat text</text><text transform="translate(268.93,73) scale(0.9255,1)" font-size="10.7" fill="#555555" >Sloučit a zarovnat na střed</text><text transform="translate(421.77,47) scale(0.9107,1)" font-size="10.7" fill="#4a4a55" >Obecný</text><text transform="translate(456.57,75) scale(1.0057,1)" font-size="16.2" fill="#6a6a6a" >%</text><text transform="translate(477.99,72) scale(1.0234,1)" font-size="8.3" fill="#777" >000</text><text transform="translate(561.25,67) scale(0.9096,1)" font-size="10.7" fill="#555555" >Podmíněné</text><text transform="translate(555.02,80) scale(0.9527,1)" font-size="10.7" fill="#555555" >formátování</text><text transform="translate(629.22,67) scale(0.9406,1)" font-size="10.7" fill="#555555" >Formátovat</text><text transform="translate(622.63,80) scale(0.9564,1)" font-size="10.7" fill="#555555" >jako tabulku</text><text transform="translate(697.96,67) scale(0.8892,1)" font-size="10.7" fill="#555555" >Styly</text><text transform="translate(690.34,80) scale(0.9186,1)" font-size="10.7" fill="#555555" >buňky</text><text transform="translate(746.08,68) scale(0.9508,1)" font-size="10.7" fill="#555555" >Vložit</text><text transform="translate(778.66,68) scale(0.9302,1)" font-size="10.7" fill="#555555" >Odstranit</text><text transform="translate(824.14,67) scale(0.9228,1)" font-size="10.7" fill="#555555" >Formát</text><text transform="translate(509.25,68) scale(0.9678,1)" font-size="7.2" fill="#666" >.0</text><text transform="translate(503.71,75) scale(1.1425,1)" font-size="7.2" fill="#666" >.00</text><text transform="translate(525.85,68) scale(1.0968,1)" font-size="7.2" fill="#666" >.00</text><text transform="translate(530.95,75) scale(0.9678,1)" font-size="7.2" fill="#666" >.0</text><text transform="translate(254.01,42) scale(1.3166,1)" font-size="8.2" fill="#6a6a6a" >ab</text><text transform="translate(254.11,49) scale(1.1442,1)" font-size="8.2" fill="#6a6a6a" >c</text></g></svg>
</div>
<div id="fbar"><svg class="abs" style="left:0;top:0" width="900" height="33" viewBox="0 105 900 33"><rect x="-10" y="112.9" width="16.7" height="19.4" rx="3" fill="none" stroke="#606060" stroke-width="1"/><rect x="10.3" y="112.9" width="900" height="19.4" rx="3" fill="none" stroke="#606060" stroke-width="1"/><path d="M0.5,121.5 l2.2,3 M2.7,121.5 l-2.2,3" stroke="#bdbdbd" stroke-width="1" fill="none"/></svg></div>
<div id="colhead"><svg class="abs" style="left:0;top:0" width="900" height="22" viewBox="0 0 900 22"><line x1="12.00" y1="0.5" x2="12.00" y2="22" stroke="#9a9a9a" stroke-width="1.2"/><line x1="83.30" y1="0.5" x2="83.30" y2="22" stroke="#9a9a9a" stroke-width="1.2"/><line x1="154.60" y1="0.5" x2="154.60" y2="22" stroke="#9a9a9a" stroke-width="1.2"/><line x1="226.10" y1="0.5" x2="226.10" y2="22" stroke="#9a9a9a" stroke-width="1.2"/><line x1="259.40" y1="0.5" x2="259.40" y2="22" stroke="#9a9a9a" stroke-width="1.2"/><line x1="330.70" y1="0.5" x2="330.70" y2="22" stroke="#9a9a9a" stroke-width="1.2"/><line x1="401.90" y1="0.5" x2="401.90" y2="22" stroke="#9a9a9a" stroke-width="1.2"/><line x1="431.50" y1="0.5" x2="431.50" y2="22" stroke="#9a9a9a" stroke-width="1.2"/><line x1="503.00" y1="0.5" x2="503.00" y2="22" stroke="#9a9a9a" stroke-width="1.2"/><line x1="574.30" y1="0.5" x2="574.30" y2="22" stroke="#9a9a9a" stroke-width="1.2"/><line x1="607.40" y1="0.5" x2="607.40" y2="22" stroke="#9a9a9a" stroke-width="1.2"/><line x1="679.20" y1="0.5" x2="679.20" y2="22" stroke="#9a9a9a" stroke-width="1.2"/><line x1="750.60" y1="0.5" x2="750.60" y2="22" stroke="#9a9a9a" stroke-width="1.2"/><line x1="821.80" y1="0.5" x2="821.80" y2="22" stroke="#9a9a9a" stroke-width="1.2"/><line x1="893.40" y1="0.5" x2="893.40" y2="22" stroke="#9a9a9a" stroke-width="1.2"/><g font-family="Liberation Sans" text-rendering="geometricPrecision"><text transform="translate(43.80,17) scale(0.8272,1)" font-size="15.4" fill="#dedede" >E</text><text transform="translate(114.94,17) scale(0.9481,1)" font-size="15.4" fill="#dedede" >F</text><text transform="translate(184.84,17) scale(0.9871,1)" font-size="15.4" fill="#dedede" >G</text><text transform="translate(237.08,17) scale(1.0696,1)" font-size="15.4" fill="#dedede" >H</text><text transform="translate(292.02,17) scale(1.2842,1)" font-size="15.4" fill="#dedede" >I</text><text transform="translate(363.27,17) scale(0.8816,1)" font-size="15.4" fill="#dedede" >J</text><text transform="translate(412.36,17) scale(0.9321,1)" font-size="15.4" fill="#dedede" >K</text><text transform="translate(463.33,17) scale(0.9617,1)" font-size="15.4" fill="#dedede" >L</text><text transform="translate(530.83,17) scale(1.2605,1)" font-size="15.4" fill="#dedede" >M</text><text transform="translate(584.81,17) scale(1.1265,1)" font-size="15.4" fill="#dedede" >N</text><text transform="translate(637.43,17) scale(1.0306,1)" font-size="15.4" fill="#dedede" >O</text><text transform="translate(709.48,17) scale(0.9173,1)" font-size="15.4" fill="#dedede" >P</text><text transform="translate(779.57,17) scale(1.1157,1)" font-size="15.4" fill="#dedede" >Q</text><text transform="translate(852.55,17) scale(0.9428,1)" font-size="15.4" fill="#dedede" >R</text></g></svg></div>
<div id="bottom"></div>
</body></html>
